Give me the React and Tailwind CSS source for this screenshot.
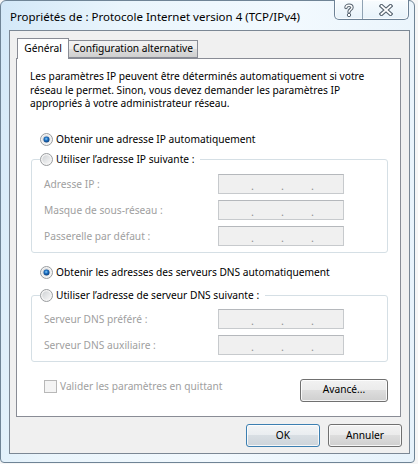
import React from 'react';

const font = "font-['Noto_Sans',sans-serif]";

const Radio = ({ checked }) => (
  <svg width="13" height="13" viewBox="0 0 13 13" className="shrink-0">
    <defs>
      <linearGradient id="rb" x1="0" y1="0" x2="1" y2="1">
        <stop offset="0" stopColor="#cfd2d5" />
        <stop offset="1" stopColor="#f7f7f7" />
      </linearGradient>
      <radialGradient id="rd" cx="0.45" cy="0.4" r="0.6">
        <stop offset="0" stopColor="#8ed0f8" />
        <stop offset="0.45" stopColor="#1f72c4" />
        <stop offset="1" stopColor="#0b3d78" />
      </radialGradient>
    </defs>
    <circle cx="6.5" cy="6.5" r="6" fill="#f4f4f4" stroke="#999c9f" />
    <circle cx="6.5" cy="6.5" r="4.2" fill="url(#rb)" />
    {checked && <circle cx="6.5" cy="6.5" r="3" fill="url(#rd)" />}
  </svg>
);

const IpBox = () => (
  <div className="w-[126px] h-[20px] border border-[#c7cacd] border-t-[#b5b8bc] bg-[#f0f0f0] flex items-end pb-[1px] pl-[32px] gap-[27px] text-[#909090] leading-[12px] text-[11px]">
    <span className="w-[3px]">.</span>
    <span className="w-[3px]">.</span>
    <span className="w-[3px]">.</span>
  </div>
);

const Field = ({ label }) => (
  <div className="flex items-center h-[20px]">
    <span className="w-[174px] pt-[2px] text-[#a0a0a0]">{label}</span>
    <IpBox />
  </div>
);

const Legend = ({ children }) => (
  <legend className="pr-[6px]">
    <div className="flex items-center gap-[3px] h-[16px]">
      <Radio />
      <span>{children}</span>
    </div>
  </legend>
);

const Button = ({ children, primary, className = '' }) => (
  <div
    className={`h-[23px] rounded-[3px] border flex items-center justify-center text-black shadow-[inset_0_0_0_1px_rgba(255,255,255,0.8)] ${
      primary
        ? 'border-[#3c7fb1] bg-[linear-gradient(#f2f4f6_0%,#e9edf0_49%,#d8dee3_50%,#cdd4da_100%)]'
        : 'border-[#707070] bg-[linear-gradient(#f2f2f2_0%,#ebebeb_49%,#dddddd_50%,#cfcfcf_100%)]'
    } ${className}`}
  >
    {children}
  </div>
);

export default function App() {
  return (
    <div className={`w-[418px] h-[464px] bg-[#f6f6f6] overflow-hidden ${font} text-[10.2px] leading-[13.5px] text-black`}>
      <div className="w-[415px] h-[463px] border border-[#6f8496] rounded-t-[6px] rounded-b-[4px] bg-[linear-gradient(100deg,#d3e8f8_0%,#eaf5fc_25%,#f2f9fe_60%,#e6f2fb_100%)] flex flex-col pl-[8px]">
        <div className="h-[29px] flex items-start">
          <span className="mt-[8px] ml-[1px] text-[11.5px] leading-[16px] text-black">
            Propriétés de : Protocole Internet version 4 (TCP/IPv4)
          </span>
          <div className="ml-auto mr-[5px] flex h-[20px] -mt-[1px] border border-t-0 border-[#6d8296] rounded-b-[5px] bg-[linear-gradient(#f8fcfe,#e7f2fa)] shadow-[inset_0_0_0_1px_rgba(255,255,255,0.7)]">
            <div className="w-[28px] flex items-center justify-center border-r border-[#8fa2b3]">
              <svg width="10" height="14" viewBox="0 0 10 14">
                <path d="M2 4.5 C2 1.5 8 1.5 8 4.5 C8 6.5 5 6.5 5 9" fill="none" stroke="#56636f" strokeWidth="3.4" strokeLinecap="round" />
                <path d="M2 4.5 C2 1.5 8 1.5 8 4.5 C8 6.5 5 6.5 5 9" fill="none" stroke="#ffffff" strokeWidth="1.4" strokeLinecap="round" />
                <circle cx="5" cy="12" r="1.7" fill="#ffffff" stroke="#56636f" strokeWidth="1" />
              </svg>
            </div>
            <div className="w-[45px] flex items-center justify-center">
              <svg width="14" height="12" viewBox="0 0 14 12">
                <path d="M2.5 2 L11.5 10 M11.5 2 L2.5 10" stroke="#56636f" strokeWidth="4" strokeLinecap="square" />
                <path d="M2.5 2 L11.5 10 M11.5 2 L2.5 10" stroke="#ffffff" strokeWidth="1.8" strokeLinecap="square" />
              </svg>
            </div>
          </div>
        </div>

        <div className="w-[401px] h-[424px] border border-[#7b8794] bg-[#f0f0f0] pt-[7px] pl-[6px] flex flex-col">
          <div className="flex items-end pl-[1px] h-[21px] relative z-10">
            <div className="h-[21px] w-[52px] bg-white border border-b-0 border-[#898c95] flex items-center justify-center pb-[1px]">
              Général
            </div>
            <div className="h-[18px] mb-[1px] w-[130px] -ml-[1px] border border-[#898c95] bg-[linear-gradient(#f2f2f2_0%,#ebebeb_50%,#dddddd_51%,#cfcfcf_100%)] flex items-center justify-center whitespace-nowrap">
              Configuration alternative
            </div>
          </div>
          <div className="w-[385px] h-[359px] -mt-[1px] border border-[#898c95] bg-white pl-[14px] pr-[12px] pt-[11px] flex flex-col">
            <p className="-ml-[1px]">
              Les paramètres IP peuvent être déterminés automatiquement si votre
              réseau le permet. Sinon, vous devez demander les paramètres IP
              appropriés à votre administrateur réseau.
            </p>

            <div className="mt-[21px] ml-[9px] flex items-center gap-[3px] h-[16px]">
              <Radio checked />
              <span>Obtenir une adresse IP automatiquement</span>
            </div>

            <fieldset className="mt-[4px] w-[357px] border border-[#d5dfe5] rounded-[3px] px-[8px] pb-[6px]">
              <Legend>Utiliser l’adresse IP suivante :</Legend>
              <div className="pl-[4px] mt-[6px] flex flex-col gap-[6px]">
                <Field label="Adresse IP :" />
                <Field label="Masque de sous-réseau :" />
                <Field label="Passerelle par défaut :" />
              </div>
            </fieldset>

            <div className="mt-[12px] ml-[9px] flex items-center gap-[3px] h-[16px]">
              <Radio checked />
              <span>Obtenir les adresses des serveurs DNS automatiquement</span>
            </div>

            <fieldset className="mt-[7px] w-[357px] border border-[#d5dfe5] rounded-[3px] px-[8px] pb-[6px]">
              <Legend>Utiliser l’adresse de serveur DNS suivante :</Legend>
              <div className="pl-[4px] mt-[5px] flex flex-col gap-[6px]">
                <Field label="Serveur DNS préféré :" />
                <Field label="Serveur DNS auxiliaire :" />
              </div>
            </fieldset>

            <div className="mt-[17px] flex items-start">
              <div className="ml-[13px] flex items-center gap-[3px] h-[16px] text-[#a0a0a0]">
                <div className="w-[13px] h-[13px] border border-[#b8b8b8] bg-[#f4f4f4]" />
                <span>Valider les paramètres en quittant</span>
              </div>
              <Button className="ml-auto w-[88px]">Avancé...</Button>
            </div>
          </div>

          <div className="mt-[7px] flex justify-end gap-[8px] pr-[7px]">
            <Button primary className="w-[74px]">OK</Button>
            <Button className="w-[74px]">Annuler</Button>
          </div>
        </div>
      </div>
    </div>
  );
}
